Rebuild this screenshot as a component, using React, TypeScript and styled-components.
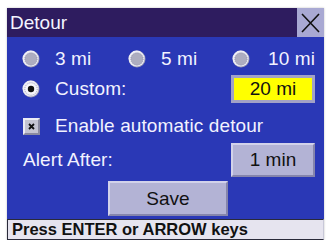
import styled, { createGlobalStyle } from "styled-components";

const Global = createGlobalStyle`
  html, body {
    margin: 0;
    padding: 0;
    background: #ffffff;
  }
  body {
    font-family: "Liberation Sans", Arial, sans-serif;
  }
`;

const Panel = styled.div`
  width: 317px;
  margin: 8px 0 0 7px;
  box-shadow: 0 0 2px rgba(0, 0, 0, 0.25);
`;

const TitleBar = styled.div`
  height: 29px;
  background: #2e1c5f;
  display: flex;
  align-items: center;
  justify-content: space-between;
`;

const Title = styled.div`
  color: #f4f4ff;
  font-size: 19px;
  padding-left: 3px;
`;

const CloseBtn = styled.div`
  width: 27px;
  height: 29px;
  background: #a9a9d3;
  display: flex;
  align-items: center;
  justify-content: center;
`;

const Body = styled.div`
  background: #2a38b6;
  padding: 6px 9px 3px 15px;
  display: flex;
  flex-direction: column;
`;

const Row = styled.div<{ $h: number; $mt?: number }>`
  height: ${({ $h }) => $h}px;
  margin-top: ${({ $mt }) => $mt ?? 0}px;
  display: flex;
  align-items: center;
`;

const RadioGrid = styled.div`
  height: 32px;
  display: grid;
  grid-template-columns: 106px 104px auto;
  align-items: center;
`;

const Option = styled.div`
  display: flex;
  align-items: center;
`;

const Label = styled.span<{ $ml?: number }>`
  color: #f2f2ff;
  font-size: 19px;
  letter-spacing: 0.1px;
  margin-left: ${({ $ml }) => $ml ?? 0}px;
  white-space: nowrap;
`;

const Spacer = styled.div`
  flex: 1;
`;

const ValueBox = styled.div<{ $yellow?: boolean }>`
  width: 84px;
  height: ${({ $yellow }) => ($yellow ? 28 : 34)}px;
  box-sizing: border-box;
  background: ${({ $yellow }) => ($yellow ? "#ffff00" : "#b3b3d5")};
  border: ${({ $yellow }) => ($yellow ? "3px" : "2px")} solid;
  border-color: ${({ $yellow }) =>
    $yellow ? "#a2a2c6" : "#d2d2ea #8585ac #8585ac #d2d2ea"};
  display: flex;
  align-items: center;
  justify-content: center;
  color: #111;
  font-size: 19px;
`;

const SaveBtn = styled.div`
  width: 120px;
  height: 35px;
  margin-left: 86px;
  box-sizing: border-box;
  background: #b3b3d5;
  border: 2px solid;
  border-color: #d2d2ea #8585ac #8585ac #d2d2ea;
  display: flex;
  align-items: center;
  justify-content: center;
  color: #111;
  font-size: 19px;
`;

const Check = styled.div`
  width: 17px;
  height: 17px;
  box-sizing: border-box;
  margin-left: 1px;
  background: #c4c4d2;
  border: 2px solid;
  border-color: #ececf4 #8a8aa0 #8a8aa0 #ececf4;
  display: flex;
  align-items: center;
  justify-content: center;
`;

const StatusBar = styled.div`
  height: 21px;
  box-sizing: border-box;
  background: #e6e4ef;
  border: 1px solid #2a2a3a;
  border-right-color: #c8c8d8;
  padding-left: 4px;
  display: flex;
  align-items: center;
  font-size: 16.5px;
  font-weight: bold;
  color: #111;
  white-space: nowrap;
`;

function Radio({ on }: { on?: boolean }) {
  return (
    <svg width="18" height="18" viewBox="0 0 18 18">
      <circle cx="9" cy="9" r="8.5" fill="#9c9cb6" />
      <circle cx="8.6" cy="8.6" r="8" fill="#eeeef6" />
      <circle cx="9" cy="9" r="6.2" fill={on ? "#f6f6fa" : "#adadc0"} stroke="#8c8ca6" strokeWidth="0.8" strokeDasharray="1 1" />
      {on && <circle cx="9" cy="9" r="3.2" fill="#111" />}
    </svg>
  );
}

export default function App() {
  return (
    <>
      <Global />
      <Panel>
        <TitleBar>
          <Title>Detour</Title>
          <CloseBtn>
            <svg width="19" height="20" viewBox="0 0 19 20">
              <path d="M1 1 L18 19 M18 1 L1 19" stroke="#111" strokeWidth="1.6" />
            </svg>
          </CloseBtn>
        </TitleBar>
        <Body>
          <RadioGrid>
            <Option>
              <Radio />
              <Label $ml={15}>3 mi</Label>
            </Option>
            <Option>
              <Radio />
              <Label $ml={15}>5 mi</Label>
            </Option>
            <Option>
              <Radio />
              <Label $ml={18}>10 mi</Label>
            </Option>
          </RadioGrid>
          <Row $h={28}>
            <Radio on />
            <Label $ml={15}>Custom:</Label>
            <Spacer />
            <ValueBox $yellow>20 mi</ValueBox>
          </Row>
          <Row $h={34} $mt={6}>
            <Check>
              <svg width="7" height="7" viewBox="0 0 7 7">
                <path d="M1 1 L6 6 M6 1 L1 6" stroke="#111" strokeWidth="1.8" />
              </svg>
            </Check>
            <Label $ml={15}>Enable automatic detour</Label>
          </Row>
          <Row $h={34}>
            <Label $ml={1}>Alert After:</Label>
            <Spacer />
            <ValueBox>1 min</ValueBox>
          </Row>
          <Row $h={35} $mt={4}>
            <SaveBtn>Save</SaveBtn>
          </Row>
        </Body>
        <StatusBar>Press ENTER or ARROW keys</StatusBar>
      </Panel>
    </>
  );
}
